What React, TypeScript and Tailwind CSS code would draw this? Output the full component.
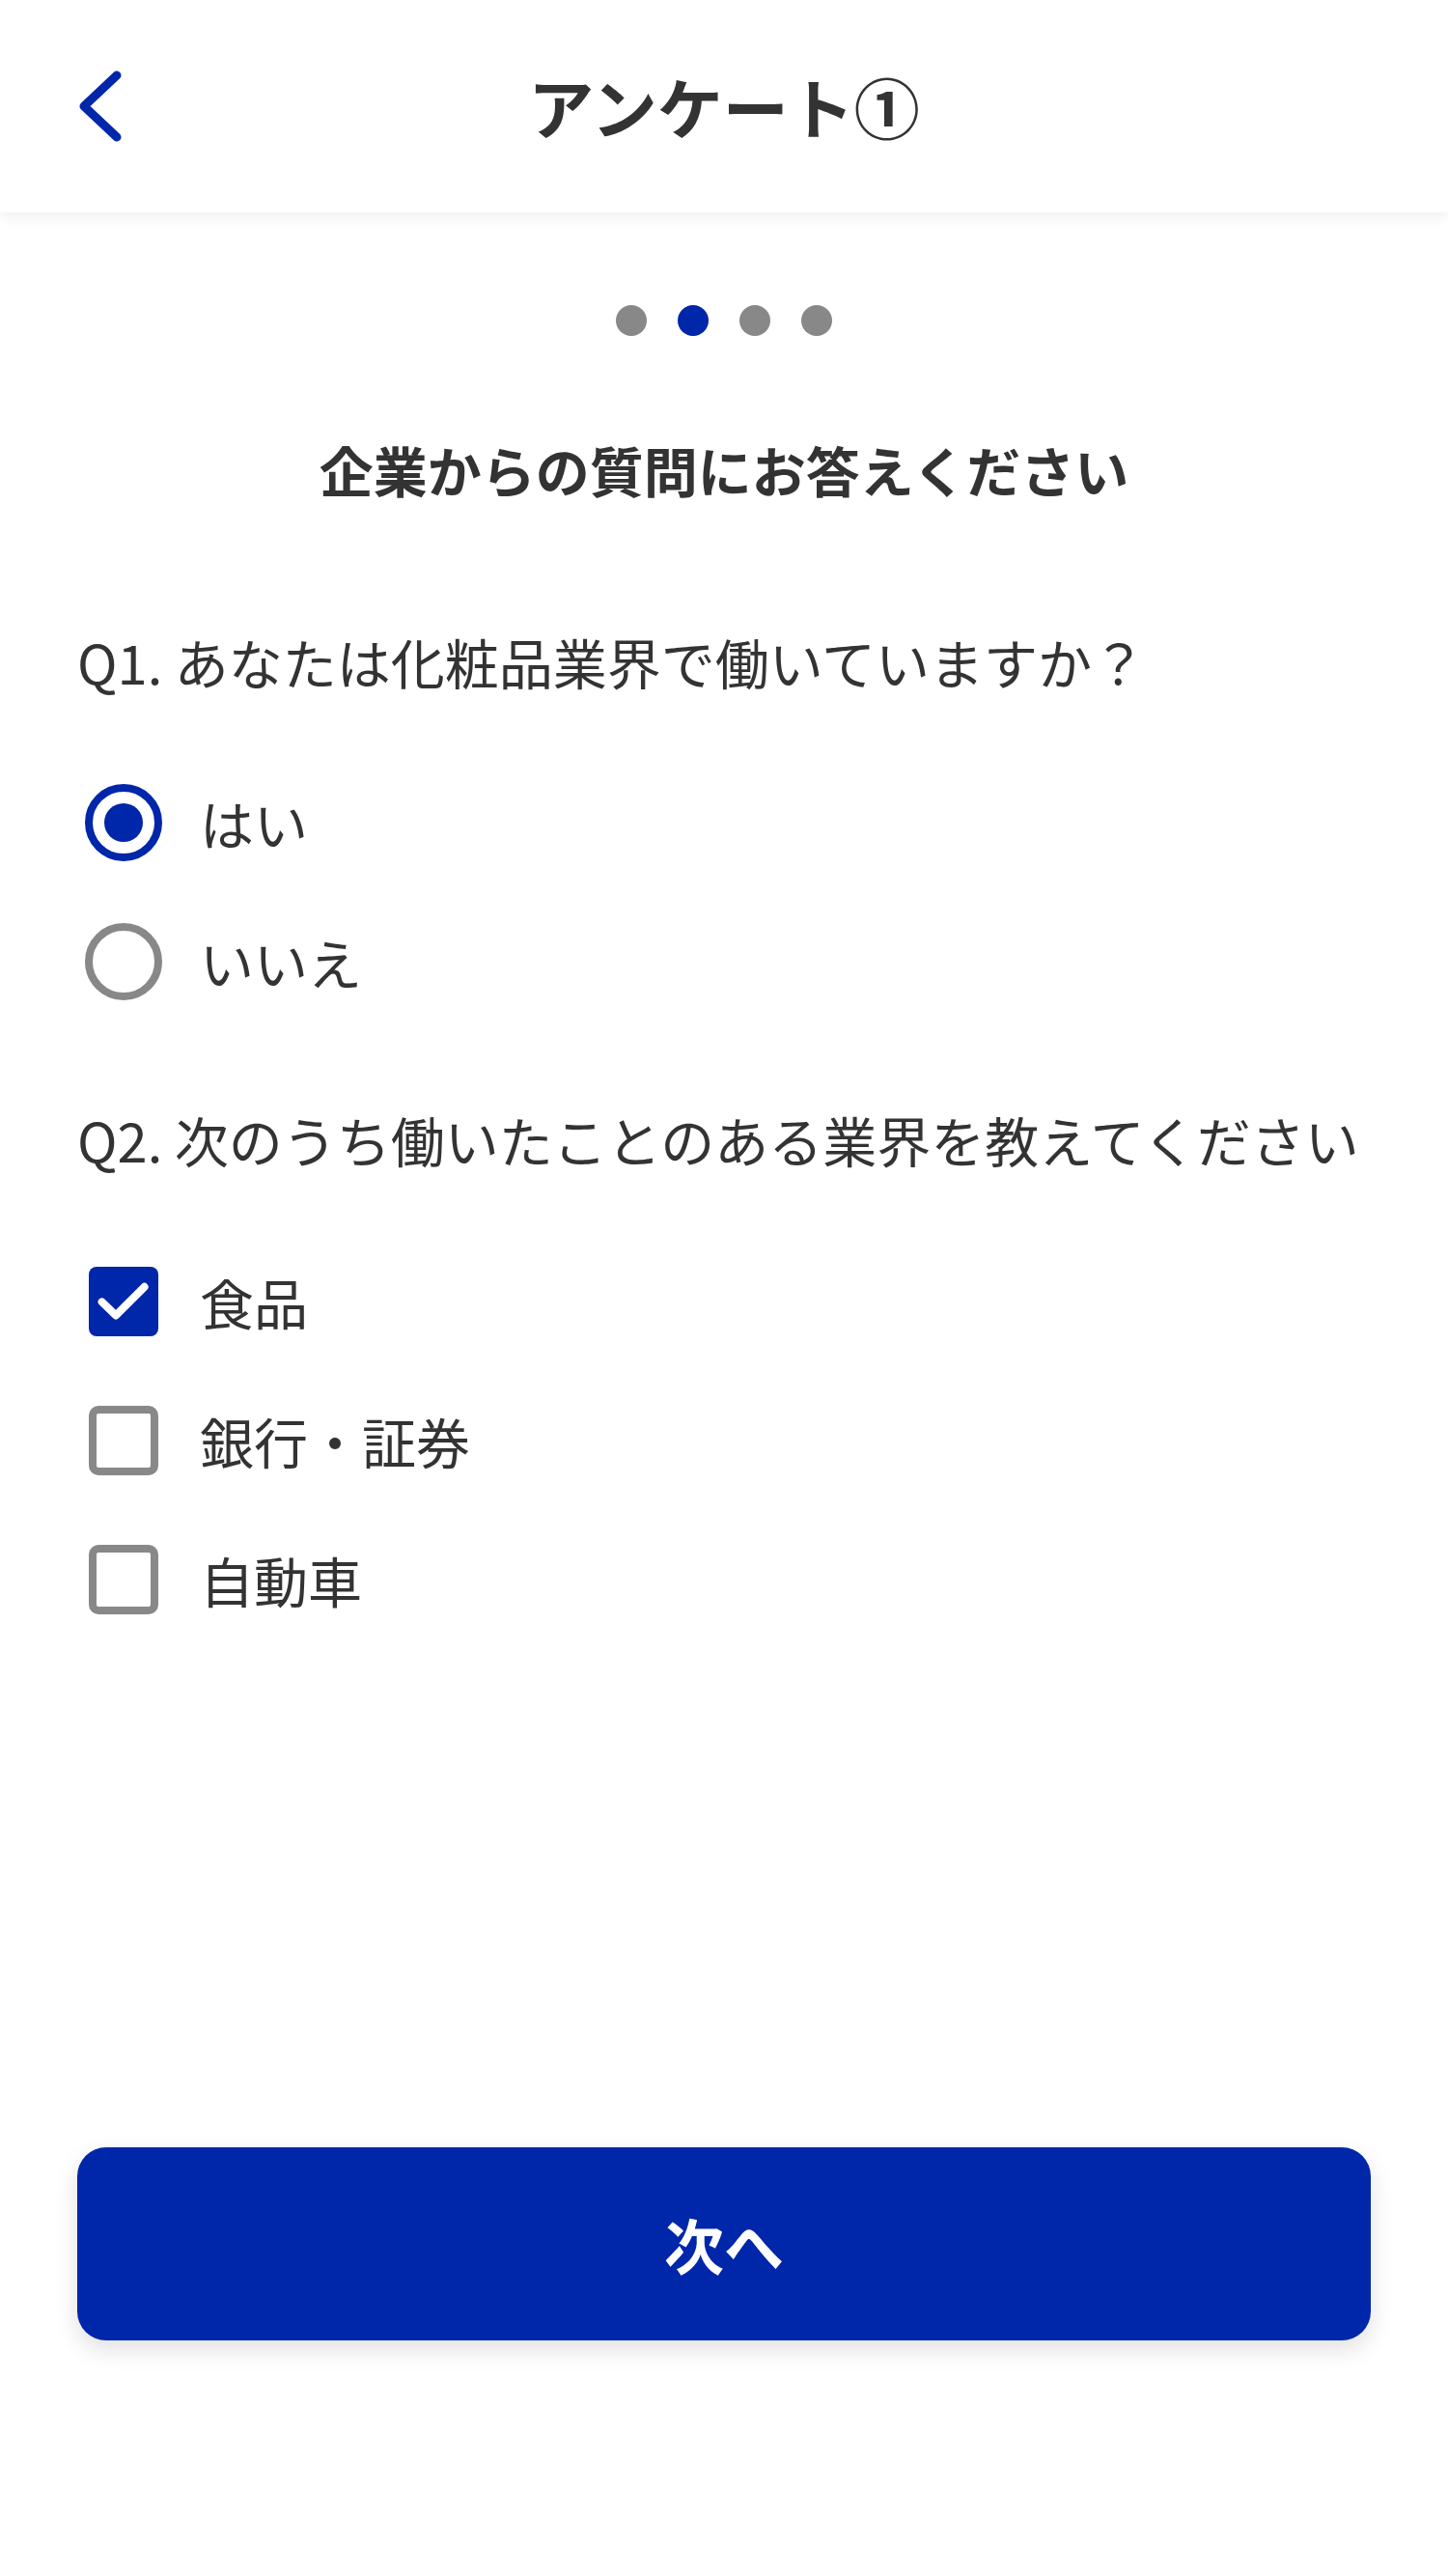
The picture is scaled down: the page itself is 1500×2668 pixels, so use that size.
import React, { useState } from 'react';

const BLUE = '#0026a9';

const BackIcon = () => (
  <svg width="48" height="84" viewBox="0 0 48 84" fill="none">
    <polyline
      points="43,10 9,42 43,74"
      stroke={BLUE}
      strokeWidth="9"
      strokeLinecap="round"
      strokeLinejoin="round"
    />
  </svg>
);

const RadioIcon = ({ checked }: { checked: boolean }) => (
  <svg width="96" height="96" viewBox="0 0 24 24">
    <circle cx="12" cy="12" r="9" fill="none" stroke={checked ? BLUE : '#888888'} strokeWidth="2" />
    {checked && <circle cx="12" cy="12" r="5" fill={BLUE} />}
  </svg>
);

const CheckIcon = ({ checked }: { checked: boolean }) =>
  checked ? (
    <svg width="96" height="96" viewBox="0 0 24 24">
      <rect x="3" y="3" width="18" height="18" rx="2" fill={BLUE} />
      <polyline
        points="6.4,12.1 10,15.6 17.4,8.2"
        fill="none"
        stroke="#ffffff"
        strokeWidth="2"
        strokeLinecap="round"
        strokeLinejoin="round"
      />
    </svg>
  ) : (
    <svg width="96" height="96" viewBox="0 0 24 24">
      <rect x="4" y="4" width="16" height="16" rx="1.5" fill="none" stroke="#888888" strokeWidth="2" />
    </svg>
  );

const App = () => {
  const [answer1, setAnswer1] = useState('はい');
  const [answer2, setAnswer2] = useState<string[]>(['食品']);

  const toggle = (v: string) =>
    setAnswer2((prev) => (prev.includes(v) ? prev.filter((x) => x !== v) : [...prev, v]));

  return (
    <div
      className="min-h-[2668px] w-full bg-white text-[#333333]"
      style={{ fontFamily: '"Noto Sans CJK JP", "Noto Sans", sans-serif' }}
    >
      <header className="relative z-10 grid h-[220px] grid-cols-[1fr_auto_1fr] items-center bg-white px-[78px] shadow-[0_4px_14px_rgba(0,0,0,0.07)]">
        <button className="flex h-[84px] w-[48px] items-center">
          <BackIcon />
        </button>
        <h1 className="text-[68px] font-bold leading-none">アンケート①</h1>
        <div />
      </header>

      <main className="flex flex-col px-[80px]">
        <div className="mt-[96px] flex justify-center gap-[32px]">
          <span className="h-[32px] w-[32px] rounded-full bg-[#888888]" />
          <span className="h-[32px] w-[32px] rounded-full bg-[#0026a9]" />
          <span className="h-[32px] w-[32px] rounded-full bg-[#888888]" />
          <span className="h-[32px] w-[32px] rounded-full bg-[#888888]" />
        </div>

        <h2 className="mt-[98px] text-center text-[56px] font-bold leading-[80px]">
          企業からの質問にお答えください
        </h2>

        <p className="mt-[119px] text-[56px] leading-[80px]">Q1. あなたは化粧品業界で働いていますか？</p>

        <div className="mt-[79px] flex flex-col gap-[48px]">
          {['はい', 'いいえ'].map((v) => (
            <button key={v} className="flex items-center text-left" onClick={() => setAnswer1(v)}>
              <RadioIcon checked={answer1 === v} />
              <span className="ml-[31px] text-[56px] leading-[80px]">{v}</span>
            </button>
          ))}
        </div>

        <p className="mt-[96px] text-[56px] leading-[80px]">Q2. 次のうち働いたことのある業界を教えてください</p>

        <div className="mt-[80px] flex flex-col gap-[48px]">
          {['食品', '銀行・証券', '自動車'].map((v) => (
            <button key={v} className="flex items-center text-left" onClick={() => toggle(v)}>
              <CheckIcon checked={answer2.includes(v)} />
              <span className="ml-[31px] text-[56px] leading-[80px]">{v}</span>
            </button>
          ))}
        </div>

        <button className="mt-[540px] flex h-[200px] w-full items-center justify-center rounded-[30px] bg-[#0026a9] text-[62px] font-bold text-white shadow-[0_10px_24px_rgba(0,0,0,0.12)]">
          次へ
        </button>
      </main>
    </div>
  );
};

export default App;
